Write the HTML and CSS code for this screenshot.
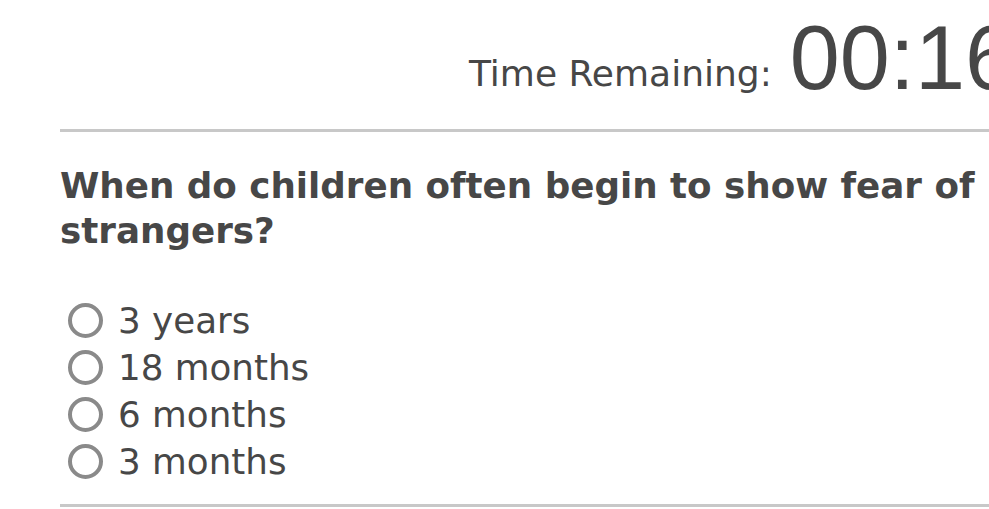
FILE: index.html
```html
<!DOCTYPE html>
<html>
<head>
<meta charset="utf-8">
<link rel="stylesheet" href="styles.css">
</head>
<body>
<div class="page">
  <header class="timer">
    <span class="timer-label">Time Remaining:</span>
    <span class="timer-value">00:16</span>
  </header>
  <section class="quiz">
    <h2 class="question">When do children often begin to show fear of strangers?</h2>
    <ul class="options">
      <li class="option"><span class="radio"></span><span class="option-text">3 years</span></li>
      <li class="option"><span class="radio"></span><span class="option-text">18 months</span></li>
      <li class="option"><span class="radio"></span><span class="option-text">6 months</span></li>
      <li class="option"><span class="radio"></span><span class="option-text">3 months</span></li>
    </ul>
  </section>
</div>
</body>
</html>
```
FILE: styles.css
```css
html, body {
  margin: 0;
  padding: 0;
  background: #fff;
  overflow: hidden;
}
body {
  font-family: "DejaVu Sans", Verdana, sans-serif;
  color: #474747;
}
.page {
  padding-left: 60px;
  width: 955px;
}
.timer {
  display: flex;
  justify-content: flex-end;
  align-items: flex-start;
  gap: 18px;
  height: 132px;
  box-sizing: border-box;
  padding-top: 13px;
  border-bottom: 3px solid #c8c8c8;
}
.timer-label {
  font-size: 36px;
  margin-top: 40px;
}
.timer-value {
  font-family: "Liberation Sans", Arial, sans-serif;
  font-size: 90px;
  line-height: 1;
}
.quiz {
  border-bottom: 3px solid #c8c8c8;
  padding-bottom: 19px;
}
.question {
  margin: 0;
  padding-top: 31px;
  font-size: 35.7px;
  font-weight: bold;
  line-height: 45px;
  width: 929px;
}
.options {
  list-style: none;
  margin: 0;
  padding: 0;
  padding-top: 44px;
}
.option {
  display: flex;
  align-items: center;
  height: 47px;
  font-size: 35.7px;
}
.radio {
  width: 35px;
  height: 35px;
  box-sizing: border-box;
  border: 4px solid #8a8a8a;
  border-radius: 50%;
  margin-left: 8px;
  margin-right: 15px;
  flex: none;
}
```
